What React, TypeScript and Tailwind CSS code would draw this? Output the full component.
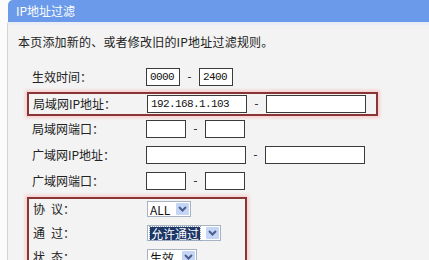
import type { ReactNode } from "react";

const cjk = { fontFamily: '"Noto Sans CJK SC", "Liberation Sans", sans-serif' };
const mono = { fontFamily: '"Liberation Mono", "DejaVu Sans Mono", monospace' };

function Box({ w, value = "" }: { w: string; value?: string }) {
  return (
    <div
      className={`${w} flex h-[18px] items-center border border-[#3a3a3a] bg-white pl-[3px] text-[11px] tracking-[-0.6px] text-[#111]`}
      style={mono}
    >
      {value}
    </div>
  );
}

function Dash() {
  return <span className="w-[19px] text-center text-[12px] text-[#333]">-</span>;
}

function Chevron() {
  return (
    <span className="flex h-[14px] w-[15px] items-center justify-center rounded-[2px] border border-white bg-[#c4d5f6]">
      <svg width="9" height="6" viewBox="0 0 9 6">
        <path d="M1 1 L4.5 4.5 L8 1" fill="none" stroke="#4a5f8a" strokeWidth="2" />
      </svg>
    </span>
  );
}

function Select({ w, children, focused = false }: { w: string; children: ReactNode; focused?: boolean }) {
  return (
    <div className={`${w} flex h-[16px] items-center justify-between border border-[#a7b2c2] bg-white pl-[2px]`}>
      {focused ? (
        <span className="bg-[#1c3668] px-[1px] text-[12px] leading-[13px] text-white outline-1 outline-dotted outline-[#8ea0c2]" style={cjk}>
          {children}
        </span>
      ) : (
        <span className="text-[12px] leading-[13px] text-[#111]" style={cjk}>
          {children}
        </span>
      )}
      <Chevron />
    </div>
  );
}

function Label({ children }: { children: ReactNode }) {
  return (
    <span className="w-[114px] shrink-0 whitespace-pre text-[12px] text-[#222]" style={cjk}>
      {children}
    </span>
  );
}

function Row({ label, children }: { label: string; children: ReactNode }) {
  return (
    <div className="flex h-[26px] items-center pl-[24px]">
      <Label>{label}</Label>
      <div className="flex items-center">{children}</div>
    </div>
  );
}

export default function App() {
  return (
    <div className="h-[260px] w-[429px] overflow-hidden bg-[#fbfbfb]">
      <div
        className="ml-[8px] flex h-[22px] items-center rounded-tl-[5px] bg-[#6a9ae9] pl-[8px] text-[12px] text-white"
        style={cjk}
      >
        IP地址过滤
      </div>
      <div className="ml-[7px] h-[238px] border-l border-t-[3px] border-l-[#d4d4d4] border-t-[#e9eef6] bg-[#f3f3f3]">
        <p className="pl-[10px] pt-[10px] text-[12px] leading-[14px] tracking-[0.2px] text-[#222]" style={cjk}>
          本页添加新的、或者修改旧的IP地址过滤规则。
        </p>
        <div className="mt-[15px]">
          <Row label="生效时间：">
            <Box w="w-[34px]" value="0000" />
            <Dash />
            <Box w="w-[34px]" value="2400" />
          </Row>
          <div className="ml-[19px] mt-[2px] flex h-[24px] w-[351px] items-center border-2 border-[#8a3434] pl-[4px] shadow-[0_0_3px_2px_#f7cfcf]">
            <Label>局域网IP地址：</Label>
            <Box w="w-[100px]" value="192.168.1.103" />
            <Dash />
            <Box w="w-[100px]" />
          </div>
          <Row label="局域网端口：">
            <Box w="w-[40px]" />
            <Dash />
            <Box w="w-[40px]" />
          </Row>
          <Row label="广域网IP地址：">
            <Box w="w-[100px]" />
            <Dash />
            <Box w="w-[100px]" />
          </Row>
          <Row label="广域网端口：">
            <Box w="w-[40px]" />
            <Dash />
            <Box w="w-[40px]" />
          </Row>
          <div className="ml-[19px] mt-[3px] flex h-[80px] w-[220px] flex-col gap-[6px] border-2 border-[#8a3434] pl-[4px] pt-[1px] shadow-[0_0_3px_2px_#f7cfcf]">
            <div className="flex items-center">
              <Label>{"协\u2002议："}</Label>
              <Select w="w-[44px]">ALL</Select>
            </div>
            <div className="flex items-center">
              <Label>{"通\u2002过："}</Label>
              <Select w="w-[74px]" focused>
                允许通过
              </Select>
            </div>
            <div className="flex items-center">
              <Label>{"状\u2002态："}</Label>
              <Select w="w-[50px]">生效</Select>
            </div>
          </div>
        </div>
      </div>
    </div>
  );
}
